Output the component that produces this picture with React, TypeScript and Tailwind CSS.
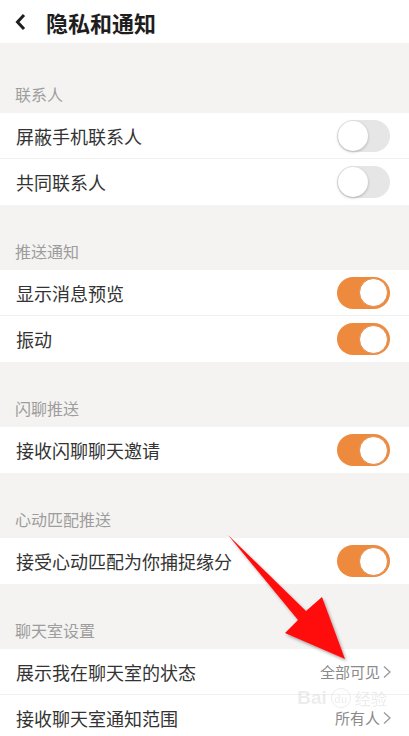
import React from "react";

const font = { fontFamily: '"Noto Sans CJK SC", "Noto Sans", sans-serif' };

function Toggle({ on }: { on: boolean }) {
  return on ? (
    <div className="w-[53px] h-[32px] rounded-full bg-[#ee8a3e] flex items-center justify-end pr-[2px]">
      <div className="w-[29px] h-[29px] rounded-full bg-white border border-[#e08a4a]" />
    </div>
  ) : (
    <div className="w-[53px] h-[32px] rounded-full bg-[#e6e6e6] flex items-center pl-[1px]">
      <div className="w-[30px] h-[30px] rounded-full bg-white shadow-[0_1px_3px_rgba(0,0,0,0.25)]" />
    </div>
  );
}

function Band({ label, h }: { label: string; h: string }) {
  return (
    <div className={`${h} bg-[#f4f3f1] flex items-end px-[15px] pb-[8px]`}>
      <span className="text-[16px] leading-[22px] text-[#9d9d9d]">{label}</span>
    </div>
  );
}

function Row({ text, right, divider }: { text: string; right: React.ReactNode; divider?: boolean }) {
  return (
    <div className={`h-[46px] bg-white flex items-center justify-between pl-[16px] pr-[19px] ${divider ? "border-b border-[#f0f0f0]" : ""}`}>
      <span className="text-[18px] leading-[24px] text-[#333333]">{text}</span>
      {right}
    </div>
  );
}

function Link({ text }: { text: string }) {
  return (
    <div className="flex items-center gap-[2px] text-[#8a8a8a] -mr-[2px]">
      <span className="text-[15px] leading-[20px]">{text}</span>
      <svg width="10" height="14" viewBox="0 0 10 14" fill="none">
        <path d="M2 1.5 L8 7 L2 12.5" stroke="#9a9a9a" strokeWidth="1.3" />
      </svg>
    </div>
  );
}

export default function App() {
  return (
    <div className="relative w-[409px] h-[736px] overflow-hidden bg-[#f4f3f1]" style={font}>
      <div className="h-[43px] bg-white flex items-center pl-[14px]">
        <svg width="14" height="18" viewBox="0 0 14 18" fill="none">
          <path d="M10 2 L3.5 9 L10 16" stroke="#1e1e1e" strokeWidth="3" strokeLinejoin="miter" />
        </svg>
        <span className="ml-[18px] text-[22px] leading-[28px] font-bold text-[#1e1e1e]">隐私和通知</span>
      </div>
      <Band label="联系人" h="h-[70px]" />
      <Row text="屏蔽手机联系人" right={<Toggle on={false} />} divider />
      <Row text="共同联系人" right={<Toggle on={false} />} />
      <Band label="推送通知" h="h-[65px]" />
      <Row text="显示消息预览" right={<Toggle on />} divider />
      <Row text="振动" right={<Toggle on />} />
      <Band label="闪聊推送" h="h-[65px]" />
      <Row text="接收闪聊聊天邀请" right={<Toggle on />} />
      <Band label="心动匹配推送" h="h-[65px]" />
      <Row text="接受心动匹配为你捕捉缘分" right={<Toggle on />} />
      <Band label="聊天室设置" h="h-[65px]" />
      <Row text="展示我在聊天室的状态" right={<Link text="全部可见" />} divider />
      <Row text="接收聊天室通知范围" right={<Link text="所有人" />} />

      {/* watermark */}
      <div className="absolute left-[292px] top-[688px] w-[100px] flex items-center justify-center gap-[4px] opacity-40 pointer-events-none text-[#d0d0d0]">
        <span className="text-[19px] leading-[20px] font-bold" style={{ fontFamily: '"Liberation Sans", sans-serif' }}>Bai</span>
        <span className="w-[20px] h-[20px] rounded-full border border-[#d0d0d0] text-[11px] leading-[18px] text-center">du</span>
        <span className="text-[16px] leading-[20px]">经验</span>
      </div>

      {/* red arrow */}
      <svg className="absolute left-0 top-0 pointer-events-none" width="409" height="736" viewBox="0 0 409 736">
        <defs>
          <filter id="sh" x="-20%" y="-20%" width="140%" height="140%">
            <feDropShadow dx="1.5" dy="2" stdDeviation="1.5" floodColor="#000" floodOpacity="0.35" />
          </filter>
        </defs>
        <polygon
          points="228,535 306,611 322,597 345,659 285,633 298,620"
          fill="#ff0a0a"
          filter="url(#sh)"
        />
      </svg>
    </div>
  );
}
